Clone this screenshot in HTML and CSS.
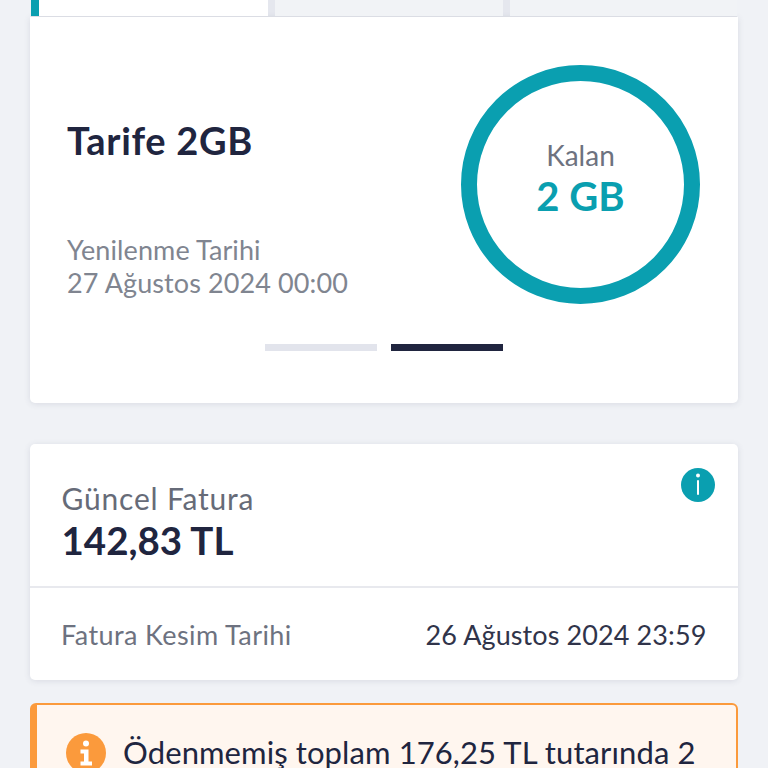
FILE: index.html
```html
<!DOCTYPE html>
<html lang="tr">
<head>
<meta charset="utf-8">
<title>Tarife</title>
<link rel="stylesheet" href="styles.css">
</head>
<body>
<main class="page">
  <div class="tabs">
    <div class="tab tab-active"></div>
    <div class="tab"></div>
    <div class="tab"></div>
  </div>
  <section class="card plan">
    <div class="plan-row">
      <div class="plan-info">
        <h1 class="plan-name">Tarife 2GB</h1>
        <div class="renew">
          <div>Yenilenme Tarihi</div>
          <div>27 Ağustos 2024 00:00</div>
        </div>
      </div>
      <div class="ring">
        <span class="ring-label">Kalan</span>
        <span class="ring-value">2 GB</span>
      </div>
    </div>
    <div class="dots">
      <span class="dot"></span>
      <span class="dot dot-active"></span>
    </div>
  </section>
  <section class="card bill">
    <div class="bill-top">
      <div class="bill-label">Güncel Fatura</div>
      <div class="bill-amount">142,83 TL</div>
      <svg class="info-icon" viewBox="0 0 34 34" aria-hidden="true">
        <circle cx="17" cy="17" r="17" fill="#0a9fb0"/>
        <circle cx="17" cy="7.5" r="2" fill="#fff"/>
        <rect x="16" y="12" width="2" height="15" rx="1" fill="#fff"/>
      </svg>
    </div>
    <div class="bill-bottom">
      <span class="bill-date-label">Fatura Kesim Tarihi</span>
      <span class="bill-date">26 Ağustos 2024 23:59</span>
    </div>
  </section>
  <section class="notice">
    <svg class="notice-icon" viewBox="0 0 40 40" aria-hidden="true">
      <circle cx="20" cy="20" r="20" fill="#fb9a3c"/>
      <circle cx="20" cy="10.5" r="3" fill="#fff"/>
      <path d="M14.5 16.5h8v12h3.5v4H14.5v-4H18v-8h-3.5z" fill="#fff"/>
    </svg>
    <p class="notice-text">Ödenmemiş toplam 176,25 TL tutarında 2</p>
  </section>
</main>
</body>
</html>
```
FILE: styles.css
```css
html, body {
  margin: 0;
  padding: 0;
  height: 768px;
  overflow: hidden;
  background: #f0f2f6;
}
.page {
  font-family: "Lato", "Noto Sans", sans-serif;
  padding: 0 30px;
  color: #20253f;
}
.tabs {
  display: flex;
  gap: 7px;
  height: 16px;
  margin: 0 1px;
  background: #e5e7ee;
  border-bottom: 1px solid #e2e4ea;
}
.tab {
  flex: 1;
  background: #f1f3f6;
}
.tab-active {
  flex: 0 0 237px;
  background: #fff;
  border-left: 8px solid #0a9fb0;
  box-sizing: border-box;
}
.card {
  background: #fff;
  border-radius: 0 0 5px 5px;
  box-shadow: 0 1px 6px rgba(60, 70, 100, 0.13);
}
.plan {
  height: 386px;
  box-sizing: border-box;
  padding: 48px 38px 0 37px;
}
.plan-row {
  display: flex;
  justify-content: space-between;
}
.plan-name {
  margin: 53px 0 0;
  font-size: 38px;
  line-height: 44px;
  font-weight: 700;
  letter-spacing: 0.7px;
  color: #20253f;
}
.renew {
  margin-top: 71px;
  font-size: 27px;
  line-height: 33px;
  letter-spacing: 0.1px;
  color: #808590;
}
.ring {
  width: 239px;
  height: 239px;
  box-sizing: border-box;
  border: 16px solid #0a9fb0;
  border-radius: 50%;
  display: flex;
  flex-direction: column;
  align-items: center;
  justify-content: center;
  padding-bottom: 11px;
}
.ring-label {
  font-size: 28px;
  line-height: 34px;
  color: #6d7280;
}
.ring-value {
  font-size: 40px;
  line-height: 48px;
  font-weight: 700;
  color: #0a9fb0;
}
.dots {
  display: flex;
  justify-content: center;
  gap: 14px;
  margin-top: 40px;
}
.dot {
  width: 112px;
  height: 7px;
  background: #e2e4ec;
}
.dot-active {
  background: #20253f;
}
.bill {
  position: relative;
  margin-top: 41px;
  border-radius: 5px;
}
.bill-top {
  position: relative;
  height: 144px;
  box-sizing: border-box;
  padding: 36px 32px 0 31.5px;
  border-bottom: 2px solid #e8e9ee;
}
.bill-label {
  font-size: 30px;
  line-height: 36px;
  letter-spacing: 0.8px;
  color: #666b78;
}
.bill-amount {
  font-size: 38.5px;
  line-height: 48px;
  font-weight: 700;
  color: #20253f;
}
.info-icon {
  position: absolute;
  top: 24px;
  right: 23.5px;
  width: 34px;
  height: 34px;
}
.bill-bottom {
  display: flex;
  justify-content: space-between;
  align-items: center;
  height: 92px;
  padding: 0 31.5px 0 31px;
  font-size: 27px;
}
.bill-date-label {
  letter-spacing: 0.4px;
  color: #6d7280;
}
.bill-date {
  letter-spacing: 0.1px;
  color: #30344a;
}
.notice {
  display: flex;
  align-items: flex-start;
  gap: 17px;
  margin-top: 23px;
  height: 200px;
  box-sizing: border-box;
  padding: 27px 16px 0 29px;
  background: #fff6ef;
  border: 2px solid #fb9a3c;
  border-left-width: 7px;
  border-radius: 6px;
}
.notice-icon {
  flex: none;
  width: 40px;
  height: 40px;
  margin-top: 1px;
}
.notice-text {
  margin: 0;
  font-size: 31px;
  line-height: 40px;
  letter-spacing: 0.1px;
  color: #20253f;
  white-space: nowrap;
}
```
